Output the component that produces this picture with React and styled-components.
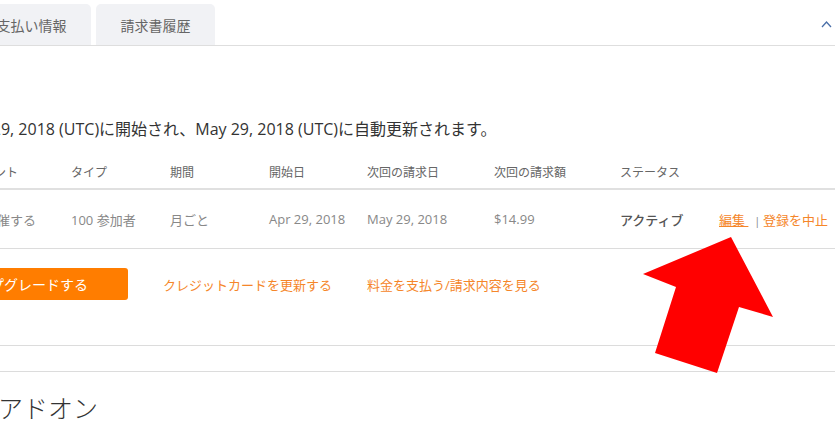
import React from "react";
import styled, { createGlobalStyle } from "styled-components";

const Global = createGlobalStyle`
  html, body { margin: 0; padding: 0; background: #fff; }
  body { font-family: "Open Sans", "Noto Sans CJK JP", sans-serif; }
`;

const FONT = `"Open Sans", "Noto Sans CJK JP", sans-serif`;
const ORANGE = "#f5862a";

const Page = styled.div`
  position: relative;
  width: 835px;
  height: 446px;
  overflow: hidden;
  font-family: ${FONT};
`;

const TabBar = styled.div`
  display: flex;
  align-items: flex-end;
  height: 45px;
  border-bottom: 1px solid #dedede;
`;

const Tabs = styled.div`
  display: flex;
  gap: 5px;
  margin-left: -28px;
`;

const Tab = styled.div`
  width: 119px;
  height: 41px;
  display: flex;
  align-items: center;
  justify-content: center;
  background: #f1f2f5;
  border-radius: 5px 5px 0 0;
  color: #666;
  font-size: 14px;
`;

const Chevron = styled.svg`
  margin-left: auto;
  margin-right: 3px;
  align-self: center;
  margin-top: 2px;
`;

const Content = styled.div`
  margin-left: -80px;
  width: calc(100% + 80px);
`;

const Lead = styled.p`
  margin: 73px 0 0 -27px;
  font-size: 16px;
  line-height: 20px;
  color: #333;
  white-space: nowrap;
`;

const Table = styled.div`
  margin: 17px 0 0 38px;
`;

const Row = styled.div`
  display: grid;
  grid-template-columns: 113px 99px 99px 98px 127px 126px 99px 1fr;
  align-items: center;
  height: ${(p) => (p.$head ? "32px" : "58px")};
  border-bottom: ${(p) => (p.$head ? "2px solid #e0e0e0" : "1px solid #dcdcdc")};
`;

const HeadCell = styled.div`
  font-size: 12px;
  color: #666;
  white-space: nowrap;
`;

const Cell = styled.div`
  font-size: 13px;
  color: ${(p) => (p.$strong ? "#555" : "#888")};
  font-weight: ${(p) => (p.$strong ? 500 : 400)};
  white-space: nowrap;
`;

const EditLink = styled.span`
  color: ${ORANGE};
  text-decoration: underline;
`;

const Sep = styled.span`
  color: #777;
  font-size: 10px;
  margin: 0 3px 0 6px;
`;

const TextLink = styled.span`
  color: ${ORANGE};
  font-size: 13px;
  white-space: nowrap;
`;

const ActionRow = styled.div`
  display: flex;
  align-items: center;
  gap: 35px;
  margin: 19px 0 0 2px;
`;

const Button = styled.div`
  height: 32px;
  padding: 0 40px;
  display: flex;
  align-items: center;
  background: #ff7d00;
  color: #fff;
  font-size: 14px;
  border-radius: 3px;
  white-space: nowrap;
`;

const Divider = styled.div`
  height: 1px;
  background: #dcdcdc;
  margin-top: ${(p) => p.$top}px;
`;

const Heading = styled.h2`
  margin: 20px 0 0 78px;
  font-size: 25px;
  line-height: 32px;
  font-weight: 300;
  color: #333;
`;

const Arrow = styled.svg`
  position: absolute;
  left: 0;
  top: 0;
  pointer-events: none;
`;

const headers = ["アカウント", "タイプ", "期間", "開始日", "次回の請求日", "次回の請求額", "ステータス", ""];

export default function App() {
  return (
    <Page>
      <Global />
      <TabBar>
        <Tabs>
          <Tab>支払い情報</Tab>
          <Tab>請求書履歴</Tab>
        </Tabs>
        <Chevron width="11" height="8" viewBox="0 0 11 8">
          <path d="M1 7 L5.5 2 L10 7" fill="none" stroke="#4a6fa8" strokeWidth="1.3" />
        </Chevron>
      </TabBar>
      <Content>
        <Lead>プランは Apr 29, 2018 (UTC)に開始され、May 29, 2018 (UTC)に自動更新されます。</Lead>
        <Table>
          <Row $head>
            {headers.map((h, i) => (
              <HeadCell key={i}>{h}</HeadCell>
            ))}
          </Row>
          <Row>
            <Cell>随時開催する</Cell>
            <Cell>100 参加者</Cell>
            <Cell>月ごと</Cell>
            <Cell>Apr 29, 2018</Cell>
            <Cell>May 29, 2018</Cell>
            <Cell>$14.99</Cell>
            <Cell $strong>アクティブ</Cell>
            <Cell>
              <EditLink>編集&nbsp;</EditLink>
              <Sep>|</Sep>
              <TextLink>登録を中止</TextLink>
            </Cell>
          </Row>
        </Table>
        <ActionRow>
          <Button>アップグレードする</Button>
          <TextLink>クレジットカードを更新する</TextLink>
          <TextLink>料金を支払う/請求内容を見る</TextLink>
        </ActionRow>
        <Divider $top={45} />
        <Divider $top={25} />
        <Heading>アドオン</Heading>
      </Content>
      <Arrow width="835" height="446" viewBox="0 0 835 446">
        <polygon
          points="731,237 773,317 739,307 717,373 655,353 676,287 643,274"
          fill="#ff0000"
        />
      </Arrow>
    </Page>
  );
}
